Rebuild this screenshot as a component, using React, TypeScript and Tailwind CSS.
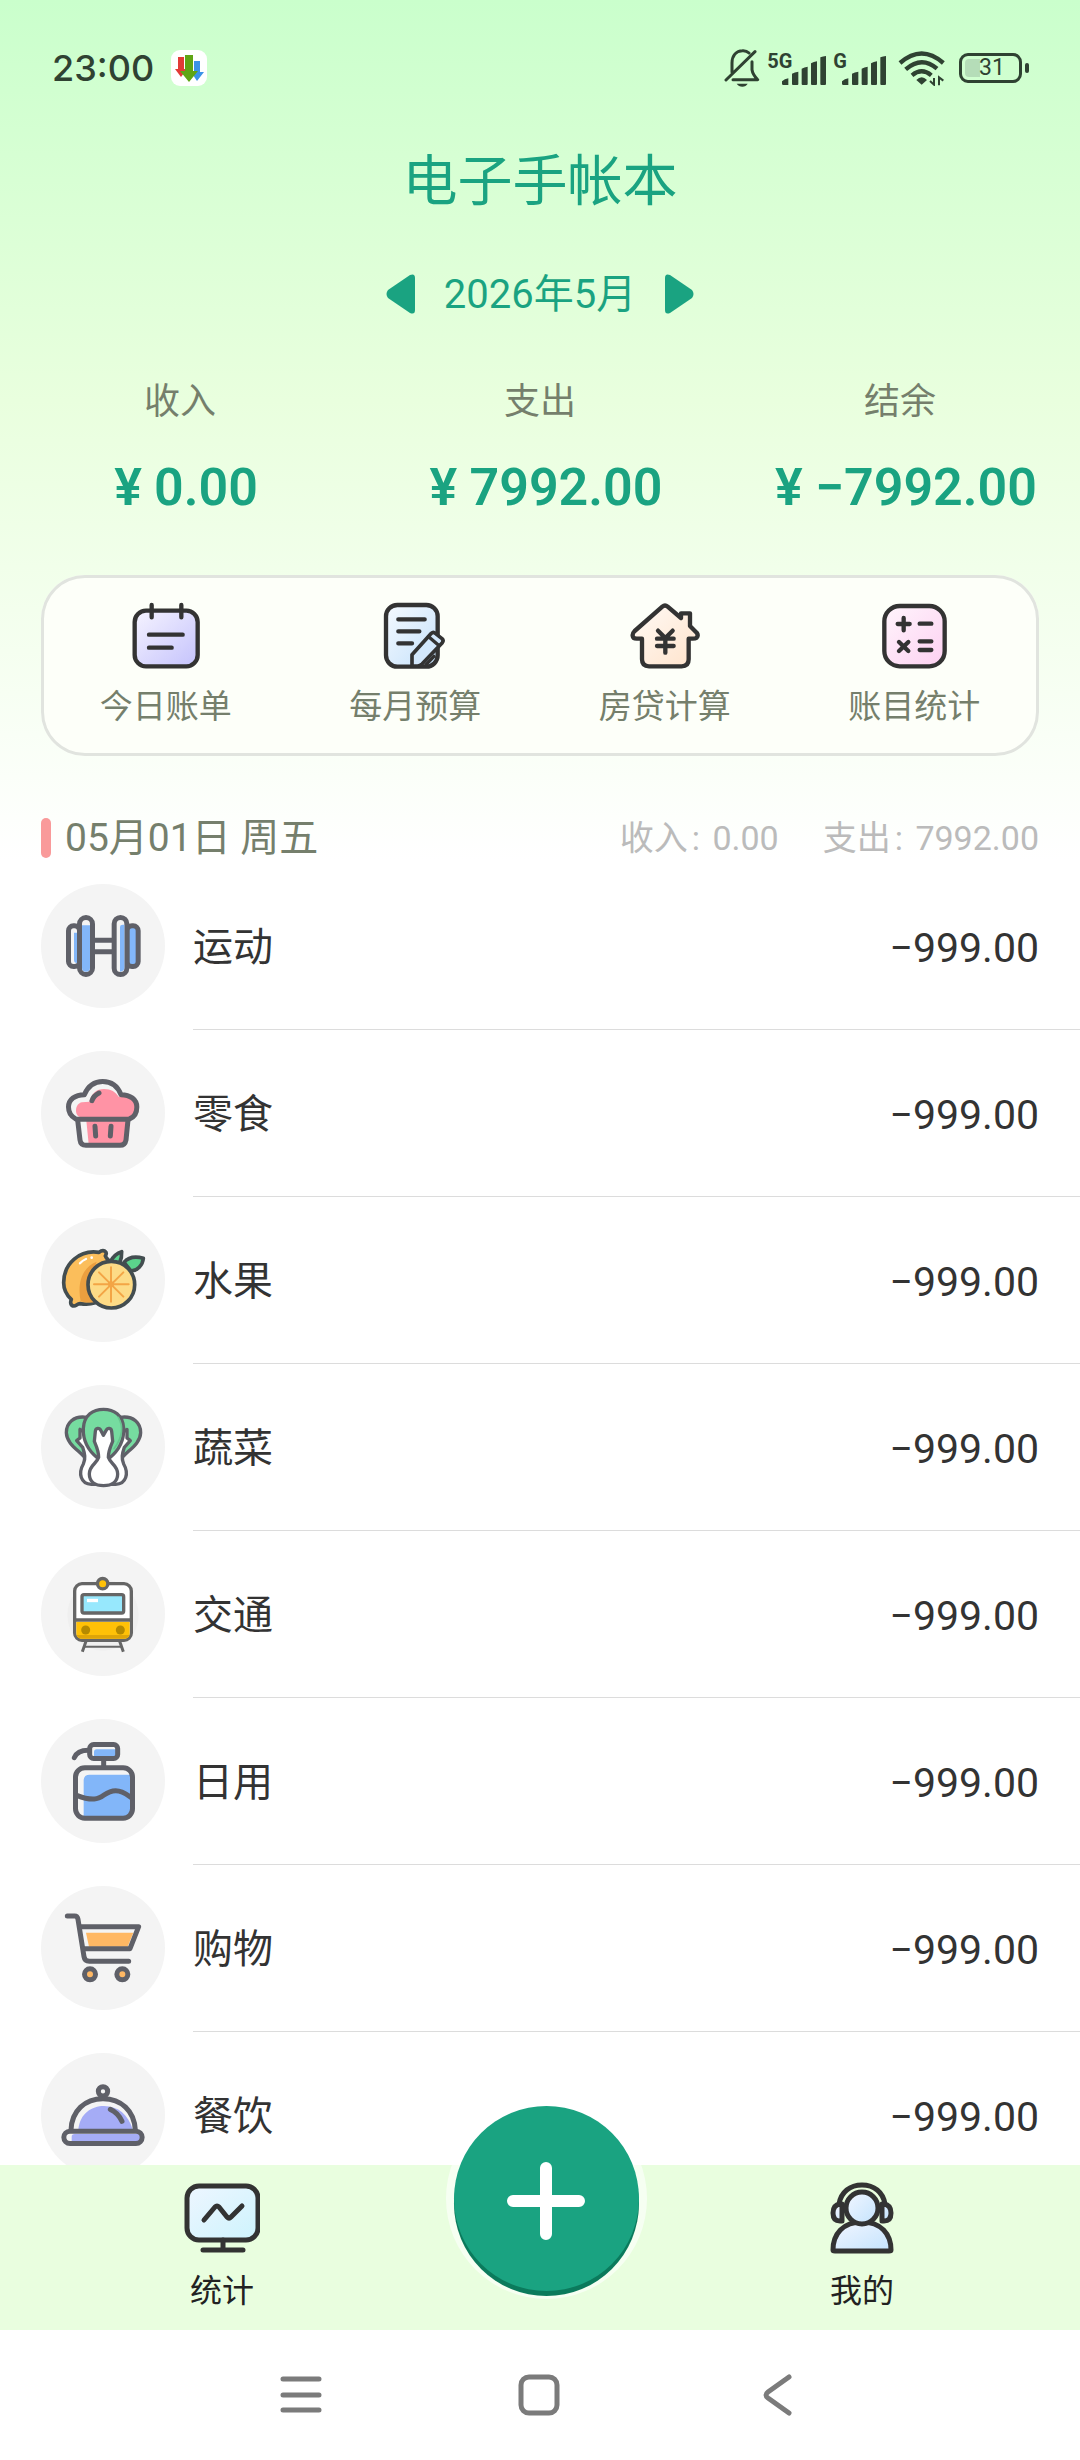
import type { ReactNode } from 'react';

const LINE = '#5f6068';
const DARK = '#333333';

interface Category {
  name: string;
  amount: string;
  icon: ReactNode;
}

interface Shortcut {
  label: string;
  icon: ReactNode;
}

function DumbbellIcon() {
  return (
    <svg className="size-full" viewBox="33 12 372 372" fill="none" stroke={LINE} strokeWidth={15}>
      <path d="M188 181H252M188 215H252" />
      <rect x="115.5" y="137.5" width="33" height="122" rx="15" fill="#f4f4f4" />
      <path d="M132 158h9v92q-9-2-9-10z" fill="#82b6f9" stroke="none" />
      <rect x="291" y="137.5" width="33.5" height="122" rx="15" fill="#82b6f9" />
      <rect x="148.5" y="112.5" width="39" height="171" rx="19.5" fill="#f4f4f4" />
      <path d="M156 136h24v128q0 11-12 11t-12-11z" fill="#82b6f9" stroke="none" />
      <rect x="252.5" y="112.5" width="38" height="171" rx="19" fill="#f4f4f4" />
      <path d="M270 140q0-6 8-6h5v130q0 10-13 11z" fill="#82b6f9" stroke="none" />
    </svg>
  );
}

function CupcakeIcon() {
  return (
    <svg className="size-full" viewBox="33 513 372 372" fill="none" stroke={LINE} strokeWidth={15} strokeLinecap="round" strokeLinejoin="round">
      <path d="M169 722H290L285 780Q283 792 270 792H176z" fill="#ff93a5" stroke="none" />
      <path d="M152 712C132 708 134 670 156 667Q168 665 178 665C184 640 200 627 222 627C244 627 256 636 266 650C300 648 318 660 318 682C318 698 308 712 298 716z" fill="#ff93a5" stroke="none" />
      <path d="M136 716C122 708 115.500 697 115.500 681C115.500 659 135 644 163 644C173 621 191 604.500 218 604.500C245 604.500 264 621 273 644C301 644 320.500 659 320.500 681C320.500 697 314 710 300 716Q296 718 290 718H147Q140 718 136 716z" />
      <path d="M143 720L150 780Q152 796 168 796H270Q285 796 288 780L294 720" />
      <path d="M186 662Q190 648 207 639M195 739L197 768M243 739L241 768" />
    </svg>
  );
}

function OrangeIcon() {
  return (
    <svg className="size-full" viewBox="33 24 372 372" fill="none" stroke="#434d50" strokeWidth={11} strokeLinecap="round" strokeLinejoin="round">
      <path d="M207 127C150 118 101 160 101 218C101 238 110 255 124 268C120 278 122 288 132 288C139 288 141 281 150 281C180 286 215 280 230 250L244 160C236 150 228 145 226 138C234 124 220 116 207 127z" fill="#fbbe5b" />
      <path d="M200 155C160 170 140 215 152 274Q172 280 196 276L180 220z" fill="#eb9f3f" stroke="none" />
      <path d="M150 160Q158 151 168 147" stroke="#fff" strokeWidth={7} />
      <circle cx="185" cy="143" r="4" fill="#fff" stroke="none" />
      <path d="M243 152Q254 132 275 125Q276 142 269 158" fill="#5bd38c" />
      <path d="M282 157C295 142 315 138 340 145C338 165 322 184 302 182z" fill="#5bd38c" />
      <circle cx="244" cy="224" r="70" fill="#fddb86" />
      <path d="M192 223H296M243 172V275M207 187L280 260M280 187L207 260" stroke="#f3a545" strokeWidth={6} />
      <circle cx="243" cy="223" r="9" fill="#f3a545" stroke="none" />
    </svg>
  );
}

function CabbageIcon() {
  return (
    <svg className="size-full" viewBox="33 525 372 372" fill="none" stroke={LINE} strokeWidth={10} strokeLinecap="round" strokeLinejoin="round">
      <path d="M170 622C130 616 109 640 109 668C110 700 142 718 162 740L190 730V630z" fill="#76dca0" />
      <path d="M271 622C311 616 332 640 332 668C331 700 299 718 279 740L251 730V630z" fill="#76dca0" />
      <path d="M170 670L150 658V684L140 692L158 712C164 730 168 745 160 762C144 790 152 822 184 823H257C289 822 297 790 281 762C273 745 277 730 283 712L301 692L291 684V658L271 670z" fill="#fff" />
      <path d="M204 745C185 730 158 700 160 655C162 615 190 598 220.500 598C251 598 279 615 281 655C283 700 256 730 237 745z" fill="#76dca0" />
      <path d="M265 622Q290 665 252 716" stroke="#66c48e" strokeWidth={5} />
      <path d="M206 742C206 722 198 706 193 694L196 664C197 653 208 652 213 662L220 676L228 662C233 652 244 653 245 664L248 694C243 706 235 722 235 742C241 762 263 765 263 792C263 815 245 827 220.500 827C196 827 178 815 178 792C178 765 200 762 206 742z" fill="#fff" />
    </svg>
  );
}

function TrainIcon() {
  return (
    <svg className="size-full" viewBox="33 36 372 372" fill="none" stroke="#666" strokeWidth={10}>
      <circle cx="219" cy="225" r="107" fill="#efefef" stroke="none" />
      <path d="M168 304L157 335M269 304L280 335" strokeWidth={9} />
      <path d="M164 320H273" strokeWidth={6} />
      <rect x="134" y="131" width="170" height="170" rx="22" fill="#fff" />
      <path d="M139 245H299V280Q299 296 283 296H155Q139 296 139 280z" fill="#ffc107" stroke="none" />
      <path d="M140 285Q143 296 156 296H282Q295 296 298 285z" fill="#dfa508" stroke="none" />
      <path d="M134 240H304" />
      <rect x="156" y="164" width="125" height="55" rx="6" fill="#97e8fd" />
      <path d="M171 181.500H204" stroke="#fff" />
      <circle cx="218" cy="131" r="15.500" fill="#ffc107" />
      <circle cx="167" cy="270" r="13.500" fill="#b58a00" stroke="none" />
      <circle cx="271" cy="270" r="13.500" fill="#b58a00" stroke="none" />
    </svg>
  );
}

function BottleIcon() {
  return (
    <svg className="size-full" viewBox="33 537 372 372" fill="none" stroke={LINE} strokeWidth={15} strokeLinecap="round">
      <path d="M192 650V636Q192 628 200 628H258V650z" fill="#82b6f9" stroke="none" />
      <path d="M161 830V722Q161 704 179 704H302V830z" fill="#82b6f9" stroke="none" />
      <rect x="179" y="613.500" width="84" height="42" rx="12" />
      <path d="M221 660V680M133 653Q142 631 175 631" />
      <rect x="136.500" y="683" width="171" height="151.500" rx="28" />
      <path d="M140 766C160 774 175 778 193 777C220 777 225 752 257 752C280 752 292 765 305 774" />
    </svg>
  );
}

function CartIcon() {
  return (
    <svg className="size-full" viewBox="33 48 372 372" fill="none" stroke={LINE} strokeWidth={15} strokeLinecap="round" strokeLinejoin="round">
      <path d="M168 188H310L293 230H177z" fill="#ffb864" stroke="none" />
      <path d="M112 138H134Q142 138 144 148L162 260Q164 274 178 274H296" />
      <path d="M150 170H326L300 236H160" />
      <circle cx="180" cy="313" r="16.500" fill="#ffb864" />
      <circle cx="277" cy="313" r="16.500" fill="#ffb864" />
    </svg>
  );
}

function DishIcon() {
  return (
    <svg className="size-full" viewBox="33 549 372 372" fill="none" stroke={LINE} strokeWidth={15} strokeLinecap="round">
      <path d="M145 778C150 730 185 708 222 708C265 708 295 735 308 778z" fill="#a5acf6" stroke="none" />
      <path d="M125 820V800Q125 792 134 792H328Q336 800 332 812L322 820z" fill="#a5acf6" stroke="none" />
      <circle cx="219" cy="664" r="14" />
      <path d="M123 780C125 722 165 686 219 686C273 686 313 722 316 780" />
      <rect x="101.500" y="783.500" width="235" height="37" rx="18.500" />
      <path d="M241 718Q264 728 276 754" />
    </svg>
  );
}

function CalendarIcon() {
  return (
    <svg className="size-[72px]" viewBox="87 30 216 216" fill="none" stroke={DARK} strokeWidth={13} strokeLinecap="round">
      <defs>
        <linearGradient id="calendar" x1="0" y1="0" x2="1" y2="1">
          <stop offset="0" stopColor="#f6f4ff" />
          <stop offset="1" stopColor="#c4c2fc" />
        </linearGradient>
      </defs>
      <rect x="101" y="62" width="189" height="167" rx="34" fill="url(#calendar)" />
      <path d="M152 45V82M241 45V82M144 134H245M144 173H212" />
    </svg>
  );
}

function BudgetIcon() {
  return (
    <svg className="size-[72px]" viewBox="835 30 216 216" fill="none" stroke={DARK} strokeWidth={13} strokeLinecap="round" strokeLinejoin="round">
      <defs>
        <linearGradient id="budget" x1="0" y1="0" x2="1" y2="1">
          <stop offset="0" stopColor="#f5faff" />
          <stop offset="1" stopColor="#c5e1fb" />
        </linearGradient>
      </defs>
      <rect x="856" y="45" width="155" height="185" rx="34" fill="url(#budget)" />
      <path d="M893 88H972M893 124H956M893 160H934" />
      <path d="M934 228V194L992 130Q998 124 1004 130L1024 146Q1030 152 1025 158L964 222Q958 228 950 228z" fill="#d3e8fc" strokeWidth={11} />
      <path d="M984 140L1012 164M976 224L1000 199" strokeWidth={10} />
    </svg>
  );
}

function MortgageIcon() {
  return (
    <svg className="size-[72px]" viewBox="143 30 216 216" fill="none" stroke={DARK} strokeWidth={13} strokeLinecap="round" strokeLinejoin="round">
      <defs>
        <linearGradient id="mortgage" x1="0" y1="0" x2="1" y2="1">
          <stop offset="0" stopColor="#fffaf6" />
          <stop offset="1" stopColor="#ffe3cb" />
        </linearGradient>
      </defs>
      <path d="M243 50Q251 43 259 50L299 84V70H326V108L346 128Q352 136 346 143Q342 146 334 146H322V208Q322 229 301 229H203Q182 229 182 208V146H166Q155 146 154 137Q153 130 160 123z" fill="url(#mortgage)" />
      <path d="M230 122L252 144L274 122M227 146H277M227 168H277M252 146V188" />
    </svg>
  );
}

function CalculatorIcon() {
  return (
    <svg className="size-[72px]" viewBox="892 30 216 216" fill="none" stroke={DARK} strokeWidth={13} strokeLinecap="round">
      <defs>
        <linearGradient id="calculator" x1="0" y1="0" x2="1" y2="1">
          <stop offset="0" stopColor="#fff5fc" />
          <stop offset="1" stopColor="#fdd0f1" />
        </linearGradient>
      </defs>
      <rect x="911" y="48" width="181" height="181" rx="46" fill="url(#calculator)" />
      <path d="M951 102H987M969 84V121M1017 101H1052M955 156L983 183M983 156L955 183M1017 154H1052M1017 180H1052" />
    </svg>
  );
}

function MonitorIcon() {
  return (
    <svg className="size-[76px]" viewBox="0 0 76 76" fill="none" stroke={DARK} strokeWidth={5} strokeLinecap="round" strokeLinejoin="round">
      <defs>
        <linearGradient id="monitor" x1="0" y1="0" x2="1" y2="1">
          <stop offset="0" stopColor="#eef6ff" />
          <stop offset="1" stopColor="#cdf3fd" />
        </linearGradient>
      </defs>
      <rect x="3" y="6" width="71" height="54" rx="12" fill="url(#monitor)" />
      <path d="M20 40L31 27Q33 25 35 27L43 37Q45 39 47 37L58 26M39 60V70M19 70H59" />
    </svg>
  );
}

function SupportIcon() {
  return (
    <svg className="size-[76px]" viewBox="0 0 76 76" fill="none" stroke={DARK} strokeWidth={5} strokeLinecap="round" strokeLinejoin="round">
      <defs>
        <linearGradient id="support" x1="0" y1="0" x2="1" y2="1">
          <stop offset="0" stopColor="#f2f6ff" />
          <stop offset="1" stopColor="#c3e3fd" />
        </linearGradient>
      </defs>
      <path d="M15 24C17 12 26 5 38 5S59 12 61 24" />
      <path d="M16 24H18V41H16Q9 41 9 33T16 24zM60 24H58V41H60Q67 41 67 33T60 24z" fill="url(#support)" />
      <path d="M9 70C9 54 19 42 38 42S67 54 67 70Q67 71 65 71H11Q9 71 9 70z" fill="url(#support)" />
      <circle cx="38" cy="28" r="16" fill="url(#support)" />
    </svg>
  );
}

function SignalBars() {
  return (
    <svg className="mt-[5px] h-[29px] w-[44px]" viewBox="0 0 132 87" fill="#2f4232">
      <path d="M0 76q8-8 19-9v20h-15q-4 0-4-4zM30 53q8-4 19-6v37q0 3-3 3h-13q-3 0-3-3zM59 38q8-4 18-6v52q0 3-3 3h-12q-3 0-3-3zM87 22q8-4 18-6v68q0 3-3 3h-12q-3 0-3-3zM115 4q8-3 17-4v84q0 3-3 3h-11q-3 0-3-3z" />
    </svg>
  );
}

function StatusBar() {
  return (
    <header className="flex h-[136px] items-center justify-between pr-[51px] pl-[52px] text-[#2f4232]">
      <div className="flex items-center gap-[17px]">
        <time className="font-['Inter',sans-serif] text-[36px] leading-[40px] font-medium">23:00</time>
        <svg className="size-[36px]" viewBox="0 0 36 36">
          <rect width="36" height="36" rx="9" fill="#fff" />
          <path d="M7 7h6v12h3l-6 8-6-8h3z" fill="#e23b36" />
          <path d="M23 11h6v11h4l-7 9-6-9h3z" fill="#3b93e8" />
          <path d="M14 5h8v16h5l-9 11-9-11h5z" fill="#5fa515" />
        </svg>
      </div>
      <div className="flex items-center">
        <svg className="h-[40px] w-[36px]" viewBox="70 55 108 120" fill="none" stroke="#2f4232" strokeWidth={9} strokeLinecap="round" strokeLinejoin="round">
          <path d="M94 128V100C94 76 108 64 125 63Q137 62 145 70M154 96V120Q156 134 171 150H97M76 151L163 66" />
          <path d="M108 162H141Q136 171 125 171T108 162z" fill="#2f4232" stroke="none" />
        </svg>
        <div className="ml-[7px] flex items-start">
          <span className="-mr-[10px] text-[20px] leading-[20px] font-bold">5G</span>
          <SignalBars />
        </div>
        <div className="ml-[7px] flex items-start">
          <span className="-mr-[5px] text-[20px] leading-[20px] font-bold">G</span>
          <SignalBars />
        </div>
        <svg className="ml-[12px] h-[36px] w-[48px]" viewBox="595 62 144 108" fill="none" stroke="#2f4232" strokeWidth={13}>
          <path d="M601 101Q666 44 731 101M618 120Q666 78 712 118M637 138Q666 114 695 138" />
          <path d="M650 152Q666 136 682 152L666 166z" fill="#2f4232" stroke="none" />
          <path d="M703 146V166L691 155M718 168V144L731 154" strokeWidth={6} />
        </svg>
        <div className="ml-[13px] flex items-center gap-[3px]">
          <div className="flex h-[30px] w-[63px] items-center rounded-[9px] border-3 border-[#2f4232] p-[3px]">
            <div className="flex h-full w-[15px] items-center rounded-l-[4px] bg-[#b5ddb8]">
              <span className="ml-[14px] text-[23px] leading-[24px]">31</span>
            </div>
          </div>
          <div className="h-[10px] w-[4px] rounded-full bg-[#2f4232]" />
        </div>
      </div>
    </header>
  );
}

const totals = [
  { label: '收入', value: '0.00' },
  { label: '支出', value: '7992.00' },
  { label: '结余', value: '−7992.00' },
];

const dayTotals = [
  { label: '收入', value: '0.00' },
  { label: '支出', value: '7992.00' },
];

const shortcuts: Shortcut[] = [
  { label: '今日账单', icon: <CalendarIcon /> },
  { label: '每月预算', icon: <BudgetIcon /> },
  { label: '房贷计算', icon: <MortgageIcon /> },
  { label: '账目统计', icon: <CalculatorIcon /> },
];

const categories: Category[] = [
  { name: '运动', amount: '−999.00', icon: <DumbbellIcon /> },
  { name: '零食', amount: '−999.00', icon: <CupcakeIcon /> },
  { name: '水果', amount: '−999.00', icon: <OrangeIcon /> },
  { name: '蔬菜', amount: '−999.00', icon: <CabbageIcon /> },
  { name: '交通', amount: '−999.00', icon: <TrainIcon /> },
  { name: '日用', amount: '−999.00', icon: <BottleIcon /> },
  { name: '购物', amount: '−999.00', icon: <CartIcon /> },
  { name: '餐饮', amount: '−999.00', icon: <DishIcon /> },
];

export default function App() {
  return (
    <div className="flex h-screen flex-col overflow-hidden bg-white bg-[linear-gradient(180deg,#caffcc_0px,#e9ffde_400px,#ffffff_860px)] font-['Roboto','Noto_Sans_CJK_SC',sans-serif] text-[#333333]">
      <StatusBar />

      <h1 className="pt-[2px] text-center text-[55px] leading-[86px] text-[#1aa381]">电子手帐本</h1>

      {/* Month switcher */}
      <div className="mt-[34px] flex h-[72px] items-center justify-center gap-[28px] text-[#1aa381]">
        <button type="button" aria-label="上个月">
          <svg className="h-[40px] w-[30px]" viewBox="0 0 30 40" fill="currentColor">
            <path d="M2 16Q-1 20 2 24L24 39Q29 41 29 36V4Q29-1 24 1z" />
          </svg>
        </button>
        <span className="pt-[2px] text-[40px] leading-[48px]">2026年5月</span>
        <button type="button" aria-label="下个月">
          <svg className="h-[40px] w-[30px]" viewBox="0 0 30 40" fill="currentColor">
            <path d="M28 16Q31 20 28 24L6 39Q1 41 1 36V4Q1-1 6 1z" />
          </svg>
        </button>
      </div>

      {/* Monthly totals */}
      <dl className="mt-[48px] grid grid-cols-3 text-center">
        {totals.map((total) => (
          <div key={total.label}>
            <dt className="text-[36px] leading-[48px] text-[#757f6c]">{total.label}</dt>
            <dd className="mt-[30px] text-[52px] leading-[64px] font-semibold whitespace-nowrap text-[#1aa381]">
              <span className="inline-block w-[52px]">¥</span>
              {total.value}
            </dd>
          </div>
        ))}
      </dl>

      {/* Shortcuts */}
      <nav className="mx-[41px] mt-[55px] grid grid-cols-4 rounded-[44px] bg-[#fdfff9] ring-3 ring-[#e1e4df] ring-inset">
        {shortcuts.map((item) => (
          <button key={item.label} type="button" className="flex flex-col items-center gap-[15px] pt-[25px] pb-[29px]">
            {item.icon}
            <span className="text-[33px] leading-[40px] text-[#757f6c]">{item.label}</span>
          </button>
        ))}
      </nav>

      <div className="mt-[59px] mb-[3px] flex h-[45px] shrink-0 items-center px-[41px]">
        <div className="h-[40px] w-[10px] rounded-full bg-[#f99a9a]" />
        <h2 className="ml-[14px] text-[39px] leading-[44px] text-[#757f6c]">05月01日 周五</h2>
        <p className="ml-auto flex gap-[44px] text-[34px] leading-[44px] text-[#bbbbbb]">
          {dayTotals.map((total) => (
            <span key={total.label}>
              {total.label}
              <span className="mx-[4px]">:</span> {total.value}
            </span>
          ))}
        </p>
      </div>

      {/* Entries of the day */}
      <ul className="min-h-0 flex-1 overflow-hidden">
        {categories.map((category) => (
          <li key={category.name} className="flex pl-[41px]">
            <div className="my-[21px] size-[124px] shrink-0 rounded-full bg-[#f4f4f4]">{category.icon}</div>
            <div className="ml-[28px] flex h-[167px] flex-1 items-center justify-between border-b border-[#dcdcdc] pt-[4px] pr-[41px] text-[40px] leading-[52px]">
              <span>{category.name}</span>
              <span className="text-[41px]">{category.amount}</span>
            </div>
          </li>
        ))}
      </ul>

      {/* Tab bar */}
      <nav className="grid h-[165px] shrink-0 grid-cols-3 bg-[#e9fedf] pr-[58px] pl-[62px] text-[32px] leading-[40px] text-[#222222]">
        <button type="button" className="flex flex-col items-center gap-[15px] pt-[15px]">
          <MonitorIcon />
          统计
        </button>
        <div className="-mt-[67px] flex justify-center pl-[8px]">
          <button type="button" aria-label="记一笔" className="size-[201px] rounded-full bg-white/60 p-[8px]">
            <span className="flex size-[185px] items-center justify-center rounded-full bg-[#1aa381] pt-[4px] shadow-[0_5px_0_#0b7a5c]">
              <svg className="size-[80px]" viewBox="0 0 80 80" stroke="#fff" strokeWidth={12} strokeLinecap="round">
                <path d="M7 40H73M40 7V73" />
              </svg>
            </span>
          </button>
        </div>
        <button type="button" className="flex flex-col items-center gap-[15px] pt-[15px]">
          <SupportIcon />
          我的
        </button>
      </nav>

      {/* System navigation */}
      <footer className="flex h-[130px] shrink-0 items-center justify-center gap-[191px] bg-white pr-[2px]">
        <button type="button" aria-label="最近任务">
          <svg className="size-[48px]" viewBox="0 0 48 48" stroke="#7b7b7b" strokeWidth={5} strokeLinecap="round">
            <path d="M7 8H43M7 24H43M7 39H43" />
          </svg>
        </button>
        <button type="button" aria-label="主页">
          <svg className="size-[48px]" viewBox="0 0 48 48" fill="none" stroke="#7b7b7b" strokeWidth={5}>
            <rect x="6" y="6" width="36" height="36" rx="8" />
          </svg>
        </button>
        <button type="button" aria-label="返回">
          <svg className="size-[48px]" viewBox="0 0 48 48" fill="none" stroke="#7b7b7b" strokeWidth={5} strokeLinecap="round">
            <path d="M35 6L14 21Q10 24 14 27L35 42" />
          </svg>
        </button>
      </footer>
    </div>
  );
}
